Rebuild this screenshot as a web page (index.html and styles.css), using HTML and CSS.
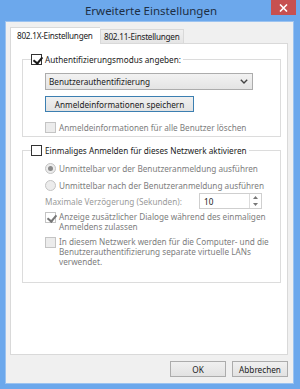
FILE: index.html
```html
<!DOCTYPE html>
<html lang="de">
<head>
    <meta charset="UTF-8">
    <title>Erweiterte Einstellungen</title>
    <link rel="stylesheet" href="styles.css">
</head>
<body>
    <div class="window">
        <div class="titlebar">
            <span></span>
            <span class="title">Erweiterte Einstellungen</span>
            <span class="close">
                <svg width="9" height="8" viewBox="0 0 9 8"><path d="M1 0.5 L8 7.5 M8 0.5 L1 7.5" stroke="#fff" stroke-width="1.6"/></svg>
            </span>
        </div>
        <div class="client">
            <div class="tabs">
                <div class="tab active">802.1X-Einstellungen</div>
                <div class="tab">802.11-Einstellungen</div>
            </div>
            <div class="panel">
                <fieldset class="group">
                    <legend>
                        <span class="row">
                            <span class="box checked"></span>
                            <span>Authentifizierungsmodus angeben:</span>
                        </span>
                    </legend>
                    <div class="group-body">
                        <div class="select">
                            <span>Benutzerauthentifizierung</span>
                            <svg width="8" height="5" viewBox="0 0 8 5"><path d="M0.8 0.8 L4 4 L7.2 0.8" fill="none" stroke="#444" stroke-width="1.4"/></svg>
                        </div>
                        <div class="btn default">Anmeldeinformationen speichern</div>
                        <div class="row disabled first-gap">
                            <span class="box"></span>
                            <span>Anmeldeinformationen für alle Benutzer löschen</span>
                        </div>
                    </div>
                </fieldset>

                <fieldset class="group second">
                    <legend>
                        <span class="row">
                            <span class="box"></span>
                            <span>Einmaliges Anmelden für dieses Netzwerk aktivieren</span>
                        </span>
                    </legend>
                    <div class="group-body">
                        <div class="row disabled radio-row">
                            <span class="radio on"></span>
                            <span>Unmittelbar vor der Benutzeranmeldung ausführen</span>
                        </div>
                        <div class="row disabled radio-row next">
                            <span class="radio"></span>
                            <span>Unmittelbar nach der Benutzeranmeldung ausführen</span>
                        </div>
                        <div class="delay-row">
                            <span class="faint">Maximale Verzögerung (Sekunden):</span>
                            <div class="spin">
                                <span>10</span>
                                <span class="spin-arrows">
                                    <svg width="5" height="3" viewBox="0 0 5 3"><path d="M0 3 L2.5 0 L5 3 Z" fill="#777"/></svg>
                                    <svg width="5" height="3" viewBox="0 0 5 3"><path d="M0 0 L2.5 3 L5 0 Z" fill="#777"/></svg>
                                </span>
                            </div>
                        </div>
                        <div class="row disabled multi">
                            <span class="box checked"></span>
                            <span>Anzeige zusätzlicher Dialoge während des einmaligen Anmeldens zulassen</span>
                        </div>
                        <div class="row disabled multi last">
                            <span class="box"></span>
                            <span>In diesem Netzwerk werden für die Computer- und die Benutzerauthentifizierung separate virtuelle LANs verwendet.</span>
                        </div>
                    </div>
                </fieldset>
            </div>
            <div class="footer">
                <div class="btn">OK</div>
                <div class="btn">Abbrechen</div>
            </div>
        </div>
    </div>
</body>
</html>
```

FILE: styles.css
```css
* {
    box-sizing: border-box;
}

body {
    margin: 0;
    font-family: "Noto Sans", "Open Sans", sans-serif;
    font-size: 8.2px;
    color: #1a1a1a;
}

.window {
    width: 300px;
    height: 389px;
    background-color: #6ca8ec; /* Win8 frame */
    display: flex;
    flex-direction: column;
    padding: 0 7px 6px 6px;
}

.titlebar {
    height: 22px;
    display: grid;
    grid-template-columns: 1fr auto 1fr;
    align-items: start;
    margin-right: -3px;
}

.title {
    font-size: 11.5px;
    line-height: 22px;
    color: #1d2f44;
}

.close {
    justify-self: end;
    width: 25px;
    height: 15px;
    background-color: #c75050;
    display: flex;
    justify-content: center;
    align-items: center;
}

.client {
    flex: 1;
    background-color: #f0f0f0;
    display: flex;
    flex-direction: column;
    padding: 4px 5px 0 4px;
    box-shadow: 0 0 0 1px #9cc3f0;
}

/* Tabs */
.tabs {
    display: flex;
    align-items: flex-end;
    height: 17px;
    position: relative;
    z-index: 1;
}

.tab {
    height: 14px;
    line-height: 13px;
    padding: 0 3px;
    border: 1px solid #d9d9d9;
    border-bottom: none;
    background: linear-gradient(#f0f0f0, #e5e5e5);
    letter-spacing: -0.25px;
    white-space: nowrap;
}

.tab.active {
    width: 90px;
    height: 17px;
    line-height: 16px;
    background: #fff;
    border-right: none;
    margin-bottom: -1px;
    padding: 0 0 0 6px;
}

.panel {
    height: 312px;
    background-color: #fff;
    border: 1px solid #d9d9d9;
    padding: 0 6px 0 11px;
}

/* Group boxes */
.group {
    margin: 9px 0 0 0;
    padding: 0 0 2px 8px;
    border: 1px solid #dcdcdc;
}

.group.second {
    margin-top: 7px;
    padding-bottom: 15px;
}

.group legend {
    padding: 0 2px 0 0;
}

.group-body {
    padding-left: 14px;
}

.row {
    display: flex;
    align-items: center;
    gap: 3px;
    line-height: 13px;
}

.row.multi {
    align-items: flex-start;
    line-height: 10px;
    margin-top: 3px;
}

.row.last {
    margin-top: 5px;
}

.disabled {
    color: #7d7d7d;
}

.faint {
    color: #9a9a9a;
}

.box {
    width: 11px;
    height: 11px;
    border: 1px solid #333;
    background: #fff;
    flex: none;
    position: relative;
}

.disabled .box {
    border-color: #c4c4c4;
    background: #ececec;
}

.box.checked::after {
    content: "";
    position: absolute;
    left: 3px;
    top: 0;
    width: 4px;
    height: 7px;
    border: solid #1a1a1a;
    border-width: 0 2px 2px 0;
    transform: rotate(40deg);
}

.disabled .box.checked {
    background: #fff;
}

.disabled .box.checked::after {
    border-color: #777;
}

.radio {
    width: 11px;
    height: 11px;
    border: 1px solid #c4c4c4;
    border-radius: 50%;
    background: #ececec;
    flex: none;
    display: flex;
    justify-content: center;
    align-items: center;
}

.radio.on::after {
    content: "";
    width: 5px;
    height: 5px;
    border-radius: 50%;
    background: #8a8a8a;
}

.radio-row {
    margin-top: 5px;
}

.radio-row.next {
    margin-top: 4px;
}

.first-gap {
    margin-top: 9px;
}

/* Dropdown */
.select {
    margin-top: 7px;
    width: 208px;
    height: 17px;
    border: 1px solid #acacac;
    background: linear-gradient(#f2f2f2, #e4e4e4);
    display: flex;
    justify-content: space-between;
    align-items: center;
    padding: 0 4px 0 3px;
}

/* Buttons */
.btn {
    height: 16px;
    border: 1px solid #acacac;
    background: linear-gradient(#f0f0f0, #e2e2e2);
    display: flex;
    justify-content: center;
    align-items: center;
}

.btn.default {
    width: 149px;
    margin-top: 6px;
    border-color: #3c7fb1;
}

/* Delay spinner */
.delay-row {
    display: flex;
    justify-content: space-between;
    align-items: center;
    margin-top: 1px;
    width: 217px;
}

.spin {
    width: 63px;
    height: 16px;
    border: 1px solid #cfcfcf;
    display: flex;
    justify-content: space-between;
    align-items: center;
    padding-left: 4px;
}

.spin-arrows {
    width: 12px;
    height: 14px;
    border-left: 1px solid #dcdcdc;
    display: flex;
    flex-direction: column;
    justify-content: space-around;
    align-items: center;
}

/* Footer */
.footer {
    display: flex;
    justify-content: flex-end;
    gap: 6px;
    margin-top: 6px;
}

.footer .btn {
    width: 56px;
}
```
